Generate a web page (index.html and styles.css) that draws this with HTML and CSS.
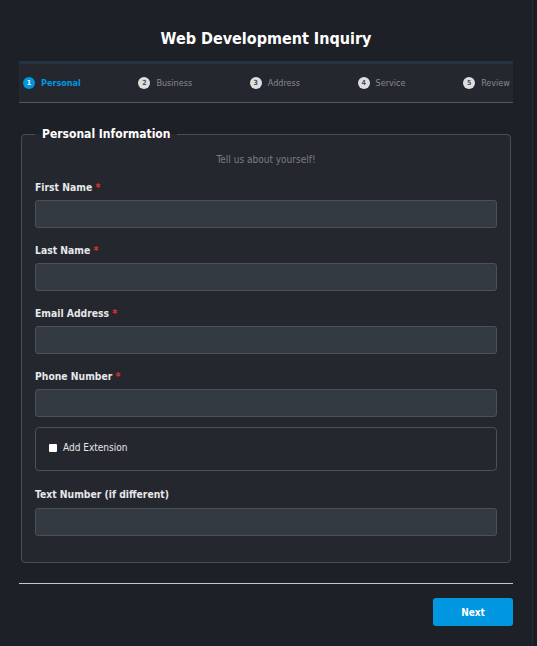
FILE: index.html
```html
<!DOCTYPE html>
<html>
<head>
<meta charset="utf-8">
<link rel="stylesheet" href="styles.css">
</head>
<body>
<div class="page">
  <h1 class="title">Web Development Inquiry</h1>
  <div class="stepper">
    <div class="step active"><span class="num">1</span><span class="lbl">Personal</span></div>
    <div class="step"><span class="num">2</span><span class="lbl">Business</span></div>
    <div class="step"><span class="num">3</span><span class="lbl">Address</span></div>
    <div class="step"><span class="num">4</span><span class="lbl">Service</span></div>
    <div class="step"><span class="num">5</span><span class="lbl">Review</span></div>
  </div>
  <fieldset class="panel">
    <legend class="legend">Personal Information</legend>
    <p class="sub">Tell us about yourself!</p>
    <div class="field">
      <label class="label">First Name <span class="req">*</span></label>
      <div class="input"></div>
    </div>
    <div class="field">
      <label class="label">Last Name <span class="req">*</span></label>
      <div class="input"></div>
    </div>
    <div class="field">
      <label class="label">Email Address <span class="req">*</span></label>
      <div class="input"></div>
    </div>
    <div class="field">
      <label class="label">Phone Number <span class="req">*</span></label>
      <div class="input"></div>
    </div>
    <div class="ext">
      <span class="check"></span><span class="ext-lbl">Add Extension</span>
    </div>
    <div class="field last">
      <label class="label">Text Number (if different)</label>
      <div class="input"></div>
    </div>
  </fieldset>
  <div class="rule"></div>
  <div class="actions"><button class="next">Next</button></div>
</div>
</body>
</html>
```
FILE: styles.css
```css
html, body {
  margin: 0;
  padding: 0;
}
body {
  background: #1a1c21;
  font-family: "DejaVu Sans Condensed", "DejaVu Sans", sans-serif;
  color: #e6e7ea;
  width: 537px;
  height: 646px;
  overflow: hidden;
}
.page {
  width: 533px;
  height: 646px;
  box-sizing: border-box;
  background: #1e2027;
  border-right: 1px solid #222c3b;
  padding: 0 19px 0 19px;
}
.title {
  margin: 0;
  padding-top: 29px;
  height: 32px;
  width: 494px;
  text-align: center;
  font-size: 16px;
  line-height: 20px;
  font-weight: bold;
  color: #ffffff;
}
.stepper {
  width: 494px;
  height: 42px;
  box-sizing: border-box;
  background: #25272f;
  border-top: 3px solid #243447;
  border-bottom: 1px solid #55585f;
  display: flex;
  justify-content: space-between;
  align-items: center;
  padding: 0 3px 0 4px;
}
.step {
  display: flex;
  align-items: center;
  gap: 6px;
  font-size: 9px;
  color: #878a91;
}
.num {
  width: 12px;
  height: 12px;
  border-radius: 50%;
  background: #dcdee2;
  color: #4a4d55;
  font-size: 7px;
  font-weight: bold;
  display: flex;
  align-items: center;
  justify-content: center;
}
.step.active .num {
  background: #0096e0;
  color: #ffffff;
}
.step.active .lbl {
  color: #0096e0;
  font-weight: bold;
}
.panel {
  margin: 24px 2px 0 2px;
  padding: 0 13px 26px 13px;
  border: 1px solid #4a4d54;
  border-radius: 4px;
  background: #25272f;
  min-width: 0;
  box-sizing: border-box;
  width: 490px;
}
.legend {
  margin-left: 0;
  padding: 0 7px;
  font-size: 12px;
  font-weight: bold;
  color: #ffffff;
  line-height: 14px;
}
.sub {
  margin: 12px 0 14px 0;
  text-align: center;
  font-size: 10px;
  line-height: 14px;
  color: #7a7d84;
}
.field {
  display: flex;
  flex-direction: column;
  gap: 6px;
  margin-bottom: 16px;
}
.field.last {
  margin-bottom: 0;
  gap: 7px;
}
.label {
  font-size: 10.3px;
  font-weight: bold;
  line-height: 13px;
  color: #e6e7ea;
}
.req {
  color: #e8322b;
}
.input {
  height: 28px;
  box-sizing: border-box;
  background: #343a41;
  border: 1px solid #4c5158;
  border-radius: 3px;
}
.ext {
  height: 44px;
  box-sizing: border-box;
  border: 1px solid #4c5158;
  border-radius: 4px;
  display: flex;
  align-items: center;
  padding: 0 0 3px 13px;
  margin-top: -6px;
  margin-bottom: 17px;
}
.check {
  width: 8px;
  height: 8px;
  background: #ffffff;
  border-radius: 1px;
  margin-right: 6px;
}
.ext-lbl {
  font-size: 10px;
  color: #e6e7ea;
}
.rule {
  margin-top: 20px;
  height: 1px;
  background: #c6c7c9;
}
.actions {
  display: flex;
  justify-content: flex-end;
  margin-top: 14px;
}
.next {
  width: 80px;
  height: 28px;
  border: none;
  border-radius: 3px;
  background: #0096e0;
  color: #ffffff;
  font-family: "DejaVu Sans Condensed", "DejaVu Sans", sans-serif;
  font-size: 10px;
  font-weight: bold;
  padding: 0;
}
```
